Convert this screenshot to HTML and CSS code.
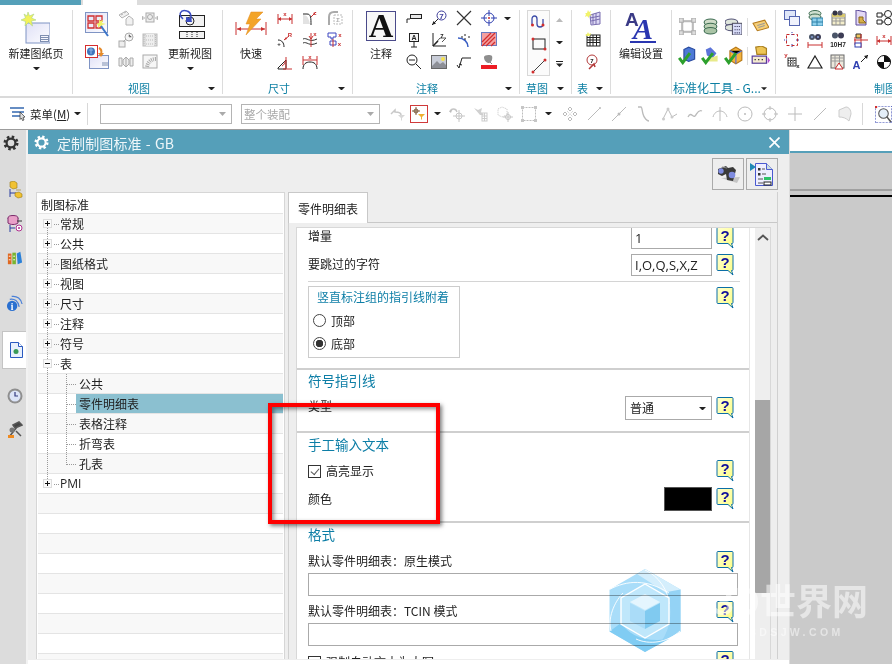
FILE: index.html
```html
<!DOCTYPE html>
<html lang="zh-CN">
<head>
<meta charset="utf-8">
<title>定制制图标准 - GB</title>
<link rel="stylesheet" href="styles.css">
</head>
<body>
<svg class="defs" width="0" height="0" aria-hidden="true">
  <defs>
    <linearGradient id="sheetg" x1="0" y1="0" x2="1" y2="1"><stop offset="0" stop-color="#dfe0f6"/><stop offset="1" stop-color="#fdfdff"/></linearGradient>
    <linearGradient id="helpg" x1="0" y1="0" x2="1" y2="1"><stop offset="0" stop-color="#ffffd0"/><stop offset="1" stop-color="#fdfd80"/></linearGradient>
    <symbol id="help" viewBox="0 0 18 22">
      <path d="M1 1.500a1 1 0 0 1 1-1h14a1 1 0 0 1 1 1v14a1 1 0 0 1-1 1h-.5l1.500 4.500-5-4.500H2a1 1 0 0 1-1-1z" fill="url(#helpg)" stroke="#0b6ea6" stroke-width="1"/>
      <text x="9" y="13.500" text-anchor="middle" class="qm">?</text>
    </symbol>
    <symbol id="gear" viewBox="0 0 16 16">
      <circle cx="8" cy="8" r="6" fill="none" stroke="currentColor" stroke-width="3" stroke-dasharray="2.400 2.310"/>
      <circle cx="8" cy="8" r="4.400" fill="none" stroke="currentColor" stroke-width="2.200"/>
    </symbol>
    <symbol id="minus" viewBox="0 0 7 3"><path d="M0 0h7L3.500 3.500z" fill="#222"/></symbol>
  </defs>
</svg>

<div class="app">
  <div class="topstrip"><span class="tab-file"></span><span class="tab-home"></span></div>

  <header class="ribbon">
    <section class="rg g1">
      <div class="big">
        <svg class="bigicon" width="30" height="32" viewBox="0 0 30 32"><rect x="6" y="11" width="24" height="20" fill="url(#sheetg)" stroke="#7f94c4"/><rect x="20.500" y="23.500" width="8" height="6" fill="none" stroke="#7f8fb0"/><path d="M21 25.500h7M21 27.500h7" stroke="#7f8fb0"/><path d="M8 0l1.500 4L14 2l-2.500 4L16 8l-4.500 1 1 5-4-3.500L5 14l.5-4.500L1 8l4.500-2L4 2l3 2z" fill="#f2f25c" stroke="#a8d48a" stroke-width=".6"/></svg>
        <span class="biglabel">新建图纸页</span>
        <svg class="bigdrop" width="7" height="3"><use href="#minus"/></svg>
      </div>
    </section>
    <i class="rsep"></i>
    <section class="rg g2">
      <div class="rbody">
        <div class="viewcol">
          <svg width="24" height="25" viewBox="0 0 24 25"><rect x=".5" y=".5" width="22" height="20" fill="url(#sheetg)" stroke="#7f94c4"/><path d="M3 4h6v5H3zM11 4h6v5h-6zM3 11h6v5H3zM11 11h5v5h-5z" fill="none" stroke="#d12f2f" stroke-width="1.300"/><path d="M14 6l1 3 3-1-1 3 4 1-4 1 1 3-3-2-2 2 0-3-2-1 3-1z" fill="#f1f36a"/><path d="M16 14l7 10" stroke="#3d76c9" stroke-width="2"/></svg>
          <svg width="24" height="25" viewBox="0 0 24 25"><rect x="4.500" y="10.500" width="19" height="13" fill="url(#sheetg)" stroke="#7f94c4"/><rect x=".5" y=".5" width="12" height="12" fill="#fff" stroke="#d62d2d"/><circle cx="6" cy="6.500" r="4" fill="#3f76bd"/><path d="M4 5h4M6 3v6" stroke="#8fb4e6"/><path d="M14 3c2 1 3 3 2 6" stroke="#e48a2a" stroke-width="2" fill="none"/><path d="M13 8h6l-3 4z" fill="#e48a2a"/><path d="M17 18h6M17 20h6" stroke="#7f8fb0"/></svg>
        </div>
        <div class="ics gc2 gray">
          <svg viewBox="0 0 16 16"><path d="M1 5l7-4 3 3-7 4zM8 9l3-3 4 3v6H8z" fill="#f1f1f1" stroke="#b5b5b5"/><path d="M3 5l2-1M6 3l2-1" stroke="#b5b5b5"/></svg>
          <svg viewBox="0 0 16 16"><rect x="1" y="9" width="6" height="6" fill="#eee" stroke="#aaa"/><circle cx="11" cy="5" r="4" fill="#f6f6f6" stroke="#aaa"/><path d="M11 2.500V5h2.500M5 10l3-3" stroke="#aaa"/></svg>
          <svg viewBox="0 0 16 16"><path d="M1 4h3v8H1zM12 4h3v8h-3zM5 6l3-3 3 3v4l-3 3-3-3z" fill="#eee" stroke="#aaa"/><path d="M8 3v10" stroke="#aaa"/></svg>
          <svg viewBox="0 0 16 16"><rect x="4" y="3" width="8" height="9" fill="#eee" stroke="#aaa"/><circle cx="8" cy="7" r="2.500" fill="none" stroke="#aaa"/><path d="M0 8h3M13 8h3M1 6l-1 2 1 2M15 6l1 2-1 2" fill="none" stroke="#aaa"/></svg>
          <svg viewBox="0 0 16 16"><rect x="1" y="2" width="14" height="12" fill="#ddd" stroke="#bbb"/><rect x="4" y="2" width="8" height="12" fill="#eee"/><path d="M2 3v10M13.500 3v10M4 4h8M4 8h8M4 12h8" stroke="#bbb" stroke-dasharray="1 1"/></svg>
          <svg viewBox="0 0 16 16"><rect x="1" y="1" width="14" height="13" fill="#f6f6f6" stroke="#aaa"/><path d="M14 5C9 5 6 8 5 13" fill="none" stroke="#aaa" stroke-width="4" stroke-dasharray="1 1"/></svg>
        </div>
        <div class="big bigview">
          <svg class="bigicon" width="32" height="32" viewBox="0 0 32 32"><rect x="5.500" y="6.500" width="25" height="11" fill="#f2f2f2" stroke="#222"/><circle cx="16" cy="12" r="4" fill="none" stroke="#222"/><rect x="5.500" y="22.500" width="25" height="7" fill="#f2f2f2" stroke="#222"/><path d="M13 23v6M18 23v6M23 23v6" stroke="#222" stroke-dasharray="1 1"/><path d="M9 10C4 6 6 0 13 2c4 1 5 6 3 10" fill="none" stroke="#3a4cc0" stroke-width="1.500"/><path d="M12 8l5 1 1 4h-6z" fill="#3a4cc0"/></svg>
          <span class="biglabel">更新视图</span>
          <svg class="bigdrop" width="7" height="3"><use href="#minus"/></svg>
        </div>
      </div>
      <div class="rfoot"><span>视图</span><svg width="7" height="3"><use href="#minus"/></svg></div>
    </section>
    <i class="rsep"></i>
    <section class="rg g3">
      <div class="rbody">
        <div class="big bigfast">
          <svg class="bigicon" width="32" height="32" viewBox="0 0 32 32"><path d="M1 15v13M31 15v13M2 22h28" stroke="#c93030" stroke-width="1"/><path d="M2 22l4-2v4zM30 22l-4-2v4z" fill="#c93030"/><path d="M16 5h12l-7 7h5L11 28l4-11h-4z" fill="#f3a428" stroke="#e08a20" stroke-width=".5"/></svg>
          <span class="biglabel">快速</span>
        </div>
        <div class="ics gc3 red">
          <svg viewBox="0 0 16 16"><path d="M1 4v10M15 4v10" stroke="#c93030"/><path d="M1 9h14" stroke="#c93030"/><path d="M1 9l3-2v4zM15 9l-3-2v4z" fill="#c93030"/><text x="8" y="5.500" class="mini">x</text></svg>
          <svg viewBox="0 0 16 16"><path d="M1 5v9c6 0 7 0 7 0-1-4-2-9-7-9z" fill="#e2e2e2"/><path d="M1 4h4c4 0 4 4 4 11" fill="none" stroke="#222"/><path d="M9 7l5-5" stroke="#c93030"/><text x="13" y="5" class="mini">c</text></svg>
          <svg viewBox="0 0 16 16"><path d="M2 15V7c0-3 2-5 5-5h4" fill="none" stroke="#aaa" stroke-width="2"/><path d="M7 5h8v9H7z" fill="none" stroke="#bbb" stroke-dasharray="2 1"/><text x="11" y="12" class="mini gray-t">Σ</text></svg>
          <svg viewBox="0 0 16 16"><path d="M1 8c4 0 6 3 6 7" fill="none" stroke="#222"/><path d="M7 8l5-4" stroke="#c93030"/><path d="M7 8l2-3 1 2z" fill="#c93030"/><text x="13" y="4.500" class="mini">R</text><text x="2" y="14" class="mini dark">+</text></svg>
          <svg viewBox="0 0 16 16"><path d="M1 7c4-2 6 4 14 0M1 11c4-2 6 4 14 0" fill="none" stroke="#333"/><path d="M9 1v14M7 4l2 3 2-3" stroke="#c93030" fill="none"/><text x="13" y="4" class="mini">x</text></svg>
          <svg viewBox="0 0 16 16"><path d="M1 1h8v4H6v2H4V5H1zM3 9h6M3 13h6M3 9v4M9 9v4" fill="none" stroke="#3c46c0"/><path d="M6 7v8" stroke="#c93030"/><text x="13" y="5" class="mini">x</text><text x="12.500" y="14" class="mini">x</text></svg>
          <svg viewBox="0 0 16 16"><path d="M1 14L9 6v9H1z" fill="none" stroke="#222"/><path d="M9 3v11" stroke="#c93030"/><path d="M5 12c2-1 3-3 3-5" fill="none" stroke="#c93030"/><path d="M6 15h9" stroke="#c93030"/></svg>
          <svg viewBox="0 0 16 16"><path d="M1 15c0-5 3-7 7-7s7 2 7 7" fill="none" stroke="#222"/><path d="M1 2v9M15 2v9M1 6h14" stroke="#c93030"/><text x="8" y="4.500" class="mini">x</text></svg>
        </div>
      </div>
      <div class="rfoot"><span>尺寸</span><svg width="7" height="3"><use href="#minus"/></svg></div>
    </section>
    <i class="rsep"></i>
    <section class="rg g4">
      <div class="rbody">
        <div class="big bignote">
          <div class="abox">A</div>
          <span class="biglabel">注释</span>
        </div>
        <div class="ics gc4">
          <svg viewBox="0 0 16 16"><path d="M1 13V9h3" fill="none" stroke="#222"/><rect x="4.500" y="4.500" width="11" height="4" fill="#e8e8e8" stroke="#222"/></svg>
          <svg viewBox="0 0 16 16"><rect x="3.500" y="1.500" width="9" height="8" fill="#f4f4f4" stroke="#222"/><text x="8" y="8" class="mini dark big-m">A</text><path d="M8 9.500V15M5 15h6" stroke="#222"/></svg>
          <svg viewBox="0 0 16 16"><circle cx="6" cy="6" r="5" fill="#fff" stroke="#222"/><path d="M3 6h6M10 10l5 5" stroke="#222"/></svg>
          <svg viewBox="0 0 16 16"><circle cx="10.500" cy="5.500" r="4.500" fill="#fff" stroke="#3d3d9a"/><text x="10.500" y="8.500" class="mini blue-t">7</text><path d="M1 15l6-6" stroke="#222"/><path d="M1 15l1.500-4 2.500 2.500z" fill="#222"/></svg>
          <svg viewBox="0 0 16 16"><path d="M2 1v13h13" fill="none" stroke="#222"/><path d="M3 13l6-7h6l-4 4" fill="none" stroke="#555"/><path d="M2 14l5-5" stroke="#222" stroke-width="1.500"/><text x="11" y="6" class="mini dark">7</text></svg>
          <svg viewBox="0 0 16 16"><rect x=".5" y="1.500" width="15" height="13" fill="#c9cdd8" stroke="#666"/><path d="M1 12l5-5 3 3 3-2 3 3v3H1z" fill="#8d8f96"/><circle cx="12" cy="5" r="2" fill="#f6e24e"/></svg>
          <svg viewBox="0 0 16 16"><path d="M1 1l14 14M15 1L1 15" stroke="#333" stroke-width="1.200"/></svg>
          <svg viewBox="0 0 16 16"><path d="M2 6c6 0 10 4 10 9" fill="none" stroke="#3a5fc4" stroke-width="1.500"/><path d="M9 2v2M9 6v2M12 5h2M5 5h2" stroke="#222"/></svg>
          <svg viewBox="0 0 16 16"><path d="M1 11l2 3 3-10h9" fill="none" stroke="#222"/><path d="M3 10l3 1" stroke="#222"/></svg>
          <svg viewBox="0 0 16 16"><circle cx="8" cy="8" r="5" fill="none" stroke="#2f3fb0"/><circle cx="8" cy="8" r="1" fill="#c62828"/><path d="M8 0v6M8 10v6M0 8h6M10 8h6" stroke="#2f3fb0"/></svg>
          <svg viewBox="0 0 16 16"><rect x=".5" y=".5" width="15" height="13" fill="#f4a0a0" stroke="#6a7bc0"/><path d="M1 10l9-9M1 14L14 1M5 14l9-9M10 14l4-4" stroke="#d32f2f" stroke-width="1.300"/></svg>
          <svg viewBox="0 0 16 16"><path d="M3 3c0-2 6-3 8-1 1 3-1 7-3 7S3 7 3 3z" fill="#8e8e8e"/><path d="M9 8l2 2" stroke="#888"/><rect y="11" width="16" height="4" fill="#ec1c24"/></svg>
          <svg class="sd" width="7" height="3"><use href="#minus"/></svg>
        </div>
      </div>
      <div class="rfoot"><span>注释</span><svg width="7" height="3"><use href="#minus"/></svg></div>
    </section>
    <i class="rsep"></i>
    <section class="rg g5">
      <div class="rbody">
        <div class="sketchbox">
          <svg viewBox="0 0 16 16"><path d="M1 11V5c0-4 5-4 5 0v5c0 4 6 4 6 0V5" fill="none" stroke="#3d4ca8" stroke-width="1.300"/><circle cx="1.500" cy="11" r="1.500" fill="#d12f2f"/><circle cx="12" cy="11" r="1.500" fill="#d12f2f"/></svg>
          <svg viewBox="0 0 16 16"><rect x="2" y="3" width="12" height="10" fill="none" stroke="#222"/><circle cx="2" cy="3" r="1.500" fill="#d12f2f"/><circle cx="14" cy="13" r="1.500" fill="#d12f2f"/></svg>
          <svg viewBox="0 0 16 16"><path d="M2 14L14 2" stroke="#444"/><circle cx="2" cy="14" r="1.500" fill="#d12f2f"/><circle cx="14" cy="2" r="1.500" fill="#d12f2f"/></svg>
        </div>
        <div class="sketcharrows">
          <svg width="7" height="4" viewBox="0 0 7 4"><path d="M0 4h7L3.500 0z" fill="#bbb"/></svg>
          <svg width="7" height="3"><use href="#minus"/></svg>
          <svg width="7" height="6" viewBox="0 0 7 6"><path d="M0 0h7v1H0z" fill="#222"/><path d="M0 2.500h7L3.500 6z" fill="#222"/></svg>
        </div>
      </div>
      <div class="rfoot"><span>草图</span><svg width="7" height="3"><use href="#minus"/></svg></div>
    </section>
    <i class="rsep"></i>
    <section class="rg g6">
      <div class="rbody">
        <div class="ics gc1">
          <svg viewBox="0 0 16 16"><path d="M5 5l10-3v12L6 15z" fill="#dcd8f4" stroke="#7a6fb0"/><path d="M5 8l10-2M6 11l9-2M8 4v10M11 3v11" stroke="#7a6fb0"/><path d="M3 0l1 2 2-1-1 3 2 1-3 1 0 2-2-2-2 1 1-3-1-1 2 0z" fill="#f1f36a"/></svg>
          <svg viewBox="0 0 16 16"><rect x="2" y="3" width="13" height="11" fill="#fff" stroke="#222"/><path d="M2 5.500h13M2 8h13M2 10.500h13M5 3v11M8 3v11M11.500 3v11" stroke="#222"/><path d="M3 0l1 2 2-1-1 3-3 0-2-1 2-1z" fill="#f1f36a"/></svg>
          <svg viewBox="0 0 16 16"><circle cx="7" cy="6" r="5" fill="#fff" stroke="#b33a3a"/><text x="7" y="9" class="mini dark">7</text><path d="M4 15l5-5 1 3" fill="none" stroke="#b33a3a" stroke-width="1.500"/></svg>
        </div>
      </div>
      <div class="rfoot"><span>表</span><svg width="7" height="3"><use href="#minus"/></svg></div>
    </section>
    <i class="rsep"></i>
    <section class="rg g7">
      <div class="big bigedit">
        <div class="aa"><span class="aa1">A</span><span class="aa2">A</span><i class="aaline"></i></div>
        <span class="biglabel">编辑设置</span>
      </div>
    </section>
    <i class="rsep"></i>
    <section class="rg g8">
      <div class="rbody">
        <div class="ics8">
          <svg viewBox="0 0 16 16"><rect x="3" y="3" width="10" height="10" fill="none" stroke="#bbb" stroke-width="2"/><path d="M0 0h4v4H0zM12 0h4v4h-4zM0 12h4v4H0zM12 12h4v4h-4z" fill="#ddd" stroke="#aaa"/></svg>
          <svg viewBox="0 0 16 16"><ellipse cx="8" cy="4" rx="6" ry="3" fill="#cfdcc8" stroke="#3c6b50"/><ellipse cx="8" cy="8" rx="6" ry="3" fill="#bcd0b4" stroke="#3c6b50"/><ellipse cx="8" cy="12" rx="6" ry="3" fill="#aac4a6" stroke="#3c6b50"/></svg>
          <svg viewBox="0 0 16 16"><ellipse cx="6" cy="4" rx="6" ry="3" fill="#dfe6dc" stroke="#557"/><ellipse cx="6" cy="9" rx="6" ry="3" fill="#dfe6dc" stroke="#557"/><rect x="7" y="5" width="9" height="11" fill="#d8dcf8" stroke="#556"/><path d="M9 8h5M9 11h5M9 14h5" stroke="#335" stroke-dasharray="1 1"/></svg>
          <i class="v8"></i>
          <svg viewBox="0 0 16 16"><path d="M1 5l11-3 4 7-11 3z" fill="#f6cf78" stroke="#b57d20"/><path d="M5 7l7-2M6 9l6-2" stroke="#999"/></svg>
          <svg viewBox="0 0 16 16"><path d="M5 3l4-2 5 2v8l-5 2-4-2z" fill="#4d79d6" stroke="#2b4ca0"/><path d="M1 10l3 4 6-8" fill="none" stroke="#2da02d" stroke-width="2.500"/></svg>
          <svg viewBox="0 0 16 16"><path d="M4 3l4-2 5 5-3 4-5-2z" fill="#5c74d8"/><path d="M5 11l9-3v5H5z" fill="#e8ea8a"/><path d="M1 10l3 4 6-8" fill="none" stroke="#2da02d" stroke-width="2.500"/></svg>
          <svg viewBox="0 0 16 16"><path d="M5 4l5-3 5 3v8l-5 3-5-3z" fill="#f4b33c" stroke="#b87a18"/><path d="M5 4l5 3 5-3M10 7v8" stroke="#5c74d8"/><path d="M1 10l3 4 6-8" fill="none" stroke="#2da02d" stroke-width="2.500"/></svg>
          <i class="v8"></i>
          <svg viewBox="0 0 16 16"><path d="M4 1l5-1 4 2v5H5z" fill="#eec556" stroke="#aa8020"/><rect x="1" y="8.500" width="12" height="6" fill="#f4ead0" stroke="#553b9a"/><path d="M3 11.500h1M6 11.500h1M9 11.500h1" stroke="#222"/><path d="M14 9l2 3-2 3z" fill="#b34ad0"/></svg>
        </div>
      </div>
      <div class="rfoot"><span>标准化工具 - G...</span><svg width="7" height="3"><use href="#minus"/></svg></div>
    </section>
    <i class="rsep"></i>
    <section class="rg g9">
      <div class="rbody">
        <div class="ics9">
          <svg viewBox="0 0 16 16"><rect x=".5" y=".5" width="11" height="9" fill="#dfe6f8" stroke="#5566b0"/><rect x="5.500" y="6.500" width="10" height="9" fill="#f0f2fc" stroke="#5566b0"/></svg>
          <svg viewBox="0 0 16 16"><ellipse cx="8" cy="3.500" rx="6" ry="3" fill="#cfe0d0" stroke="#3c6b50"/><ellipse cx="8" cy="7" rx="6" ry="3" fill="#cfe0d0" stroke="#3c6b50"/><rect x="5" y="8" width="11" height="8" fill="#8fd0ec" stroke="#2d80a8"/><path d="M5 12h11M10 8v8" stroke="#2d80a8"/></svg>
          <svg viewBox="0 0 16 16"><rect x="2" y="4" width="13" height="11" fill="#f4eecb" stroke="#777"/><path d="M2 8h13M2 11h13M6 8v7M10 8v7" stroke="#999"/><rect x="2" y="4" width="13" height="3" fill="#d8c86e"/><circle cx="5" cy="3" r="2.500" fill="#334"/><circle cx="10" cy="3" r="2.500" fill="#556"/></svg>
          <svg viewBox="0 0 16 16"><path d="M3 0l10 2v13L3 15z" fill="#e3d8f4" stroke="#5a4a9a"/><path d="M6 7h4v3l3 3H6z" fill="#d8b04a" stroke="#8a6a18"/></svg>
          <svg viewBox="0 0 16 16"><path d="M1 3h5v4H1zM1 10h5v4H1z" fill="none" stroke="#222"/><circle cx="12" cy="4" r="3.500" fill="#fff" stroke="#222"/><circle cx="12" cy="11.500" r="3.500" fill="#fff" stroke="#222"/><path d="M6 5h2M6 12h2" stroke="#222"/></svg>
          <svg viewBox="0 0 16 16"><rect x="2.500" y="2.500" width="11" height="11" fill="none" stroke="#c62828" stroke-dasharray="3 2"/><path d="M8 0v4M8 12v4M0 8h4M12 8h4" stroke="#2f3fb0" stroke-dasharray="1 1"/></svg>
          <svg viewBox="0 0 16 16"><path d="M1 10v6M15 10v6M1 13h14" stroke="#c93030"/><circle cx="5" cy="5" r="3" fill="#4a5568"/><circle cx="11" cy="5" r="3" fill="#3d3d55"/><circle cx="5" cy="5" r="1" fill="#8aa0d8"/><circle cx="11" cy="5" r="1" fill="#8aa0d8"/></svg>
          <svg viewBox="0 0 16 16"><circle cx="5" cy="3.500" r="3" fill="#4a5568"/><circle cx="11" cy="3.500" r="3" fill="#3d3d55"/><text x="8" y="15" class="tol">10H7</text></svg>
          <svg viewBox="0 0 16 16"><path d="M3 2h5v4H3z" fill="#efc45e" stroke="#333"/><path d="M1 8h14M8 2v14M2 5v8" stroke="#c93030"/><rect x="2" y="11" width="6" height="4" fill="#fff" stroke="#2f3fb0"/></svg>
          <svg viewBox="0 0 16 16"><path d="M1 4v9M15 4v9M1 9h14" stroke="#c93030"/><path d="M1 9l3-2v4zM15 9l-3-2v4z" fill="#c93030"/><text x="8" y="6" class="mini">x</text></svg>
          <svg viewBox="0 0 16 16"><rect x="4" y="4" width="8" height="8" fill="#fff" stroke="#333"/><path d="M4 6.500h8M4 9h8M6.500 4v8M9 4v8" stroke="#333" stroke-dasharray="1 .5"/><text x="14" y="14" class="mini dark">x</text><text x="2" y="3" class="mini">y</text></svg>
          <svg viewBox="0 0 16 16"><path d="M8 2l7 12H1z" fill="#fff" stroke="#222" stroke-width="1.200"/></svg>
          <svg viewBox="0 0 16 16"><rect x="1" y="1" width="13" height="13" fill="#ece8dc" stroke="#666"/><path d="M1 4h13M1 7h13M5 1v13M9.500 1v13" stroke="#999"/><path d="M9 9l4 6H5z" fill="#fff" stroke="#c62828"/></svg>
          <svg viewBox="0 0 16 16"><text x="3.500" y="15" class="aq">A</text><path d="M8 8l7-7" stroke="#222"/><path d="M15 1l-4 1 3 3z" fill="#222"/></svg>
          <svg viewBox="0 0 16 16"><circle cx="8" cy="8" r="6.500" fill="#fff" stroke="#111"/><path d="M8 1.500A6.500 6.500 0 0 1 14.500 8H8zM8 8v6.500A6.500 6.500 0 0 1 1.500 8z" fill="#111"/></svg>
        </div>
      </div>
      <div class="rfoot"><span>制图</span></div>
    </section>
  </header>

  <nav class="toolbar">
    <svg class="menuicon" width="17" height="14" viewBox="0 0 17 14"><path d="M0 1h14M2 5h12M2 9h8" stroke="#3568b0" stroke-width="1.500"/><path d="M10 5l5 5-2 .5 1 2.500-1.500.5-1-2.500-1.500 1.500z" fill="#dedede" stroke="#333" stroke-width=".7"/></svg>
    <span class="menutext">菜单(<u>M</u>)</span>
    <svg class="tdrop" width="7" height="3"><use href="#minus"/></svg>
    <i class="tsep"></i>
    <div class="tsel s1"><svg width="7" height="4" viewBox="0 0 7 4"><path d="M0 0h7L3.500 4z" fill="#aaa"/></svg></div>
    <div class="tsel s2"><span>整个装配</span><svg width="7" height="4" viewBox="0 0 7 4"><path d="M0 0h7L3.500 4z" fill="#aaa"/></svg></div>
    <div class="tc t1">
      <svg viewBox="0 0 16 16"><path d="M1 8l4-4v2c4 0 6 1 6 3" fill="none" stroke="#c8c8c8" stroke-width="1.500"/><path d="M8 9h7l-3 3v3l-1-1v-2z" fill="#d8d8d8"/></svg>
      <span class="redbox"><svg viewBox="0 0 16 16"><path d="M5 1v8M1 5h8" stroke="#7a5a3a"/><circle cx="5" cy="5" r="2" fill="none" stroke="#7a5a3a"/><path d="M7 8h7l-3 3v3l-1-1v-2z" fill="#efb030"/></svg></span>
      <svg class="tdropi" width="7" height="3"><use href="#minus"/></svg>
    </div>
    <div class="tc t2">
      <svg viewBox="0 0 16 16"><path d="M1 6c1-4 6-4 7 0" fill="none" stroke="#c6c6c6" stroke-width="1.300"/><path d="M0 5l2 2 1-3z" fill="#bbb"/><path d="M10 4v12M4 10h12" stroke="#c6c6c6"/><circle cx="10" cy="10" r="3" fill="none" stroke="#c6c6c6"/></svg>
      <svg viewBox="0 0 16 16"><path d="M1 2l4 2 4-2-1 4 3 3-4 0z" fill="#d0d0d0"/><rect x="9" y="7" width="5" height="8" fill="none" stroke="#ccc"/><path d="M9 10h5M9 12.500h5M11.500 7v8" stroke="#ccc"/></svg>
      <svg viewBox="0 0 16 16"><path d="M1 3l4-2 5 2v6l-5 2-4-2z" fill="none" stroke="#c6c6c6" stroke-dasharray="1 1"/><path d="M11 6v10M6 11h10" stroke="#c6c6c6"/><circle cx="11" cy="11" r="2.500" fill="none" stroke="#c6c6c6"/></svg>
      <svg viewBox="0 0 16 16"><rect x="1.500" y="1.500" width="13" height="13" fill="none" stroke="#bdbdbd" stroke-dasharray="2 1"/><path d="M0 0h3v3H0zM13 0h3v3h-3zM0 13h3v3H0zM13 13h3v3h-3z" fill="#c6c6c6"/></svg>
      <svg class="tdropi" width="7" height="3"><use href="#minus"/></svg>
    </div>
    <div class="tc t3">
      <svg viewBox="0 0 16 16"><path d="M8 1l2 2-2 2-2-2zM8 11l2 2-2 2-2-2zM1 8l2-2 2 2-2 2zM11 8l2-2 2 2-2 2z" fill="none" stroke="#bbb"/><path d="M5 5l6 6M11 5l-6 6" stroke="#ccc" stroke-dasharray="1 1"/></svg>
      <svg viewBox="0 0 16 16"><path d="M2 14L14 2" stroke="#bbb"/><circle cx="14" cy="2" r="1" fill="#bbb"/></svg>
      <svg viewBox="0 0 16 16"><path d="M1 15L15 1" stroke="#bbb"/><circle cx="8" cy="8" r="1.500" fill="#bbb"/></svg>
      <svg viewBox="0 0 16 16"><path d="M3 1h3c1 0 1 3 2 7s4 7 6 7" fill="none" stroke="#bbb" stroke-width="1.300"/></svg>
    </div>
    <div class="tc t4">
      <svg viewBox="0 0 16 16"><path d="M1 13L6 3l4 8 5-3" fill="none" stroke="#bbb"/><circle cx="6" cy="3" r="1.500" fill="#ccc"/><circle cx="10" cy="11" r="1.500" fill="#ccc"/><circle cx="1.500" cy="13" r="1.500" fill="#ccc"/></svg>
      <svg viewBox="0 0 16 16"><path d="M1 11c3-6 5 1 7-1s3-7 7-5" fill="none" stroke="#bbb" stroke-width="1.300"/></svg>
      <svg viewBox="0 0 16 16"><path d="M8 1v14M1 11c1-4 4-6 7-6s6 2 7 6" fill="none" stroke="#bbb"/></svg>
      <svg viewBox="0 0 16 16"><circle cx="8" cy="8" r="7" fill="none" stroke="#bbb"/><circle cx="8" cy="8" r="1" fill="#bbb"/></svg>
      <svg viewBox="0 0 16 16"><circle cx="8" cy="8" r="6" fill="none" stroke="#bbb"/><path d="M8 0v4M8 12v4M0 8h4M12 8h4" stroke="#bbb"/></svg>
      <svg viewBox="0 0 16 16"><path d="M8 1v14M1 8h14" stroke="#bbb"/></svg>
      <svg viewBox="0 0 16 16"><path d="M2 14L14 2" stroke="#bbb"/></svg>
      <svg viewBox="0 0 16 16"><path d="M2 11V4l7-3c3 0 5 3 5 7l-2 7c-3-3-6-4-10-4z" fill="#eee" stroke="#ccc"/></svg>
    </div>
    <i class="tsep s3"></i>
    <span class="redbox zoomi"><svg viewBox="0 0 16 16"><rect x="0" y="0" width="16" height="16" fill="none" stroke="#2f3fb0" stroke-dasharray="2 1"/><circle cx="8" cy="7" r="4.500" fill="#e4eef8" stroke="#555"/><path d="M11 10l4 5" stroke="#555" stroke-width="1.500"/><path d="M0 0h2v2H0z" fill="#d12f2f"/></svg></span>
  </nav>

  <main class="workspace">
    <aside class="rail">
      <svg class="railgear" width="16" height="16"><use href="#gear"/></svg>
      <svg class="r-a" width="16" height="18" viewBox="0 0 16 18"><path d="M3 1l4-1 3 2v5l-4 1-3-2z" fill="#f1c232" stroke="#9a7a10" stroke-width=".6"/><path d="M3 8v8M3 12h6" stroke="#2a3fa0"/><path d="M9 9h5M8 12l4-1 3 2v3l-4 1-3-2z" fill="#f1c232" stroke="#9a7a10" stroke-width=".6"/></svg>
      <svg class="r-b" width="16" height="18" viewBox="0 0 16 18"><ellipse cx="6" cy="3" rx="5" ry="2.500" fill="#e8a0c8" stroke="#7a2a6a"/><path d="M1 3v5c2 2 8 2 10 0V3" fill="#e8a0c8" stroke="#7a2a6a"/><path d="M3 10v7M3 13h5" stroke="#2a3fa0"/><circle cx="12" cy="13" r="3" fill="#fff" stroke="#b03090"/><circle cx="12" cy="13" r="1" fill="#b03090"/><path d="M10 6h5" stroke="#333"/></svg>
      <svg class="r-c" width="16" height="16" viewBox="0 0 18 16"><path d="M1 3h4v12H1z" fill="#e06820"/><path d="M6 2h4v13H6z" fill="#78b430"/><path d="M11 3l4-2 2 12-5 2z" fill="#2a80d8"/><path d="M2 6h2M7 6h2M2 10h2M7 10h2" stroke="#fff"/></svg>
      <svg class="r-d" width="17" height="18" viewBox="0 0 18 18"><circle cx="6.500" cy="11" r="5.500" fill="#2a70d0"/><text x="6.500" y="15" class="iinfo">i</text><path d="M4 4c5-1 9 2 10 8M6 1c6-1 10 3 11 8" fill="none" stroke="#4a80d8" stroke-width="1.300"/></svg>
      <div class="railtab"><svg width="13" height="16" viewBox="0 0 13 16"><path d="M.5.500h8l4 4v11H.5z" fill="#e8f0fc" stroke="#2a5ac0"/><path d="M8.500.5v4h4" fill="#fff" stroke="#2a5ac0"/><circle cx="6" cy="9.500" r="2.500" fill="#3a9a58"/></svg></div>
      <svg class="r-e" width="16" height="16" viewBox="0 0 16 16"><circle cx="8" cy="8" r="7.500" fill="#8f8f8f"/><circle cx="8" cy="8" r="5.500" fill="#dce4f8"/><path d="M8 4v4h3" fill="none" stroke="#333a80" stroke-width="1.200"/></svg>
      <svg class="r-f" width="16" height="18" viewBox="0 0 16 18"><path d="M2 16l8-10M6 4l6-3 3 3-7 3z" stroke="#555" fill="#444" stroke-width="1.500"/><circle cx="5" cy="9" r="2.500" fill="#777"/><path d="M1 14h6v3H1z" fill="#ef8a20"/><path d="M9 10l5 5" stroke="#555" stroke-width="1.500"/></svg>
    </aside>

    <section class="dialog">
      <header class="dtitle">
        <svg class="dgear" width="15" height="15"><use href="#gear"/></svg>
        <h1>定制制图标准 - GB</h1>
        <svg class="dclose" width="11" height="11" viewBox="0 0 11 11"><path d="M.5.5l10 10M10.500.5l-10 10" stroke="#fff" stroke-width="1.700"/></svg>
      </header>
      <div class="dtools">
        <button class="tbtn" type="button"><svg width="24" height="20" viewBox="0 0 24 20"><path d="M5 14l16 5 3-6z" fill="#c4c4c4"/><path d="M2 5l8-3 2 2 5-1 3 3-3 11-6-1-1-6-4 2-4-2z" fill="#3a3a3a"/><circle cx="5" cy="7" r="2.700" fill="#7f8ce0"/><circle cx="16" cy="11" r="3.300" fill="#7f8ce0"/><path d="M6 3l5 1" stroke="#888"/></svg></button>
        <button class="tbtn" type="button"><svg width="24" height="25" viewBox="0 0 24 25"><path d="M5.500 1.500h11l6 6v16h-17z" fill="#eef" stroke="#4a5ad0"/><path d="M16.500 1.500v6h6" fill="#cdd" stroke="#4a5ad0"/><path d="M0 1l6 4-6 4z" fill="#1e88b4"/><rect x="8" y="6" width="2.500" height="2.500" fill="#333"/><rect x="8" y="11" width="2.500" height="2.500" fill="#333"/><path d="M8 17h5M8 21h5M12 7h3M12 12h4" stroke="#555"/><rect x="14" y="15" width="7" height="3" fill="#2ec26a"/><rect x="14" y="20" width="7" height="3" fill="#fff" stroke="#222"/></svg></button>
      </div>
      <div class="dbody">
        <div class="tree">
          <div class="treehead">制图标准</div>
          <div class="rows">
            <div class="row rt first"><i class="ex"></i><span>常规</span></div>
            <div class="row rt"><i class="ex"></i><span>公共</span></div>
            <div class="row rt"><i class="ex"></i><span>图纸格式</span></div>
            <div class="row rt"><i class="ex"></i><span>视图</span></div>
            <div class="row rt"><i class="ex"></i><span>尺寸</span></div>
            <div class="row rt"><i class="ex"></i><span>注释</span></div>
            <div class="row rt"><i class="ex"></i><span>符号</span></div>
            <div class="row rt open"><i class="ex minusx"></i><span>表</span></div>
            <div class="row rc"><span>公共</span></div>
            <div class="row rc sel"><span>零件明细表</span></div>
            <div class="row rc"><span>表格注释</span></div>
            <div class="row rc"><span>折弯表</span></div>
            <div class="row rc last"><span>孔表</span></div>
            <div class="row rt final"><i class="ex"></i><span class="lat">PMI</span></div>
            <div class="row"></div><div class="row"></div><div class="row"></div><div class="row"></div><div class="row"></div><div class="row"></div><div class="row"></div><div class="row"></div><div class="row"></div>
          </div>
        </div>
        <div class="tabs">
          <div class="tabhead"><span class="tab">零件明细表</span><i class="tabline"></i></div>
          <div class="tabpage">
            <div class="pane">
              <div class="scroll">
                <section class="sec s-a">
                  <div class="frow clipfirst"><label class="up3">增量</label><input class="tin w81 lat" type="text" value="1"><svg class="hq"><use href="#help"/></svg></div>
                  <div class="frow r2"><label class="up2">要跳过的字符</label><input class="tin w81 lat" type="text" value="I,O,Q,S,X,Z"><svg class="hq"><use href="#help"/></svg></div>
                  <hr class="thin">
                  <div class="grow">
                    <div class="gbox">
                      <div class="gtitle">竖直标注组的指引线附着</div>
                      <div class="radio"><i class="rd"></i><span>顶部</span></div>
                      <div class="radio"><i class="rd on"></i><span>底部</span></div>
                    </div>
                    <svg class="hq"><use href="#help"/></svg>
                  </div>
                </section>
                <section class="sec s-b">
                  <h2>符号指引线</h2>
                  <div class="frow"><label class="up3">类型</label><div class="sel-box"><span>普通</span><svg width="7" height="3"><use href="#minus"/></svg></div><svg class="hq"><use href="#help"/></svg></div>
                </section>
                <section class="sec s-c">
                  <h2>手工输入文本</h2>
                  <div class="frow h22"><label class="chk"><i class="cb on"></i>高亮显示</label><svg class="hq"><use href="#help"/></svg></div>
                  <div class="frow r-col"><label>颜色</label><i class="swatch"></i><svg class="hq"><use href="#help"/></svg></div>
                </section>
                <section class="sec s-d">
                  <h2>格式</h2>
                  <div class="frow h22"><label class="up2">默认零件明细表：原生模式</label><svg class="hq"><use href="#help"/></svg></div>
                  <input class="wide" type="text">
                  <div class="frow h22 m5"><label class="up2">默认零件明细表：TCIN 模式</label><svg class="hq"><use href="#help"/></svg></div>
                  <input class="wide" type="text">
                  <div class="frow h22 m5"><label class="chk"><i class="cb"></i>强制自动文本为大写</label><svg class="hq"><use href="#help"/></svg></div>
                </section>
              </div>
              <div class="sbar"><svg class="sup" width="12" height="7" viewBox="0 0 12 7"><path d="M1 6l5-4.500L11 6" fill="none" stroke="#555" stroke-width="1.800"/></svg><i class="thumb"></i></div>
            </div>
          </div>
        </div>
      </div>
    </section>

    <aside class="graphics">
      <div class="gwhite"></div>
      <div class="gteal"></div>
      <div class="gline1"></div>
      <div class="gline2"></div>
    </aside>
  </main>

  <div class="redframe"></div>
  <div class="wm">
    <svg class="wmhex" width="72" height="83" viewBox="0 0 72 83">
      <path d="M36 0l35.500 20.500v42L36 83 .5 62.500v-42z" fill="#a9ddf9"/>
      <path d="M36 0l35.500 20.500L62 27 28 5z" fill="#d4eefc"/>
      <path d="M71.500 20.500v42L52 73c10-14 12-32 6-50z" fill="#94d3f5"/>
      <path d="M36 83L.5 62.500 12 54c8 12 24 20 48 16z" fill="#80ccf3"/>
      <path d="M.5 20.500C18 11 38 10 60 24M71 62C58 74 40 76 27 70M2 62C-2 46 8 30 14 24M36 1c14 6 24 22 24 34" fill="none" stroke="#fff" stroke-width=".9"/>
      <path d="M36 15l24 14v26L36 69 12 55V29z" fill="#bfe7fb" stroke="#fff" stroke-width="1.400"/>
      <path d="M21 33l15-8 15 8-15 8z" fill="#e4f5fe"/>
      <path d="M21 34l15 8v18l-15-8z" fill="#aadcf8"/>
      <path d="M51 34l-15 8v18l15-8z" fill="#80caf0"/>
    </svg>
    <div class="wmtext">
      <div class="wmcn">3D世界网</div>
      <div class="wmen">3DSJW.COM</div>
    </div>
  </div>
</div>
</body>
</html>
```
FILE: styles.css
```css
* { box-sizing: border-box; }
html, body { margin: 0; padding: 0; }
body {
  width: 892px; height: 664px; overflow: hidden; background: #fff;
  font: 12px/16px "Noto Sans CJK SC", sans-serif; color: #222;
}
.defs { position: absolute; }
.qm { font: 700 15px "Liberation Sans", sans-serif; fill: #10109c; }
.mini { font: 700 6px "Liberation Sans", sans-serif; fill: #c93030; text-anchor: middle; }
.mini.dark { fill: #222; }
.mini.gray-t { fill: #aaa; }
.mini.blue-t { fill: #3d3d9a; font-size: 8px; }
.big-m { font-size: 7px; }
.tol { font: 700 6.500px "Liberation Sans", sans-serif; fill: #222; text-anchor: middle; }
.aq { font: 700 11px "Liberation Sans", sans-serif; fill: #2f3fb0; text-anchor: middle; }
.iinfo { font: 700 10px "Liberation Serif", serif; fill: #fff; text-anchor: middle; }
.app { position: relative; width: 892px; height: 664px; display: flex; flex-direction: column; overflow: hidden; }

.topstrip { height: 5px; background: #dcdcdc; display: flex; flex: none; }
.tab-file { width: 81px; background: #55a0b9; }
.tab-home { width: 54px; margin-left: 2px; background: #fff; }

.ribbon { height: 93px; flex: none; display: flex; background: #fff; border-bottom: 2px solid #dadada; }
.rsep { flex: none; width: 1px; height: 84px; margin-top: 5px; background: #dcdcdc; }
.rg { flex: none; display: flex; flex-direction: column; }
.g1 { width: 72px; } .g2 { width: 149px; } .g3 { width: 129px; } .g4 { width: 166px; }
.g5 { width: 51px; } .g6 { width: 38px; } .g7 { width: 60px; } .g8 { width: 103px; } .g9 { width: 116px; }
.rbody { height: 75px; flex: none; display: flex; padding-top: 2px; }
.rfoot { height: 16px; display: flex; align-items: center; justify-content: space-between; padding-right: 7px; font-size: 11px; line-height: 16px; color: #0b7fa3; white-space: nowrap; }
.g2 .rfoot { padding-left: 55px; } .g3 .rfoot { padding-left: 45px; } .g4 .rfoot { padding-left: 63px; }
.g5 .rfoot { padding-left: 6px; } .g6 .rfoot { padding-left: 5px; } .g8 .rfoot { padding-left: 1px; padding-right: 8px; font-size: 12px; }
.g9 .rfoot { padding-left: 98px; justify-content: flex-start; }

.big { display: flex; flex-direction: column; align-items: center; }
.bigicon { height: 32px; flex: none; margin-bottom: 6px; }
.g1 .big { width: 72px; padding-top: 7px; }
.biglabel { font-size: 11px; line-height: 16px; white-space: nowrap; height: 16px; }
.bigdrop { margin-top: 6px; flex: none; }
.g1 .bigicon { margin-left: -2px; margin-bottom: 1px; }

.viewcol { width: 24px; margin-left: 12px; padding-top: 5px; display: flex; flex-direction: column; gap: 8px; }
.ics { display: grid; grid-auto-flow: column; grid-template-rows: repeat(3, 22px); place-items: center; }
.ics svg { width: 16px; height: 16px; }
.gc2 { margin-left: 5px; grid-template-columns: repeat(2, 24px); }
.bigview { width: 46px; margin-left: 5px; }
.bigview .bigicon { margin-top: 2px; margin-bottom: 4px; }
.bigfast { width: 42px; margin-left: 7px; }
.gc3 { grid-template-columns: repeat(3, 25px); grid-auto-flow: row; }
.bignote { width: 36px; margin-left: 10px; }
.abox { width: 30px; height: 30px; margin-top: 4px; margin-bottom: 4px; border: 1px solid #4a4a8a; background: #f8f8f8; font: 700 34px/28px "Liberation Serif", serif; color: #111; text-align: center; flex: none; }
.gc4 { margin-left: 2px; grid-template-columns: repeat(4, 25px) 12px; }
.gc4 .sd { width: 7px; height: 3px; grid-row: 1; }
.sketchbox { margin: 3px 0 0 7px; width: 23px; height: 66px; display: grid; grid-template-rows: repeat(3, 22px); place-items: center; border: 1px solid #d8d8d8; background: #fbfbfb; }
.sketchbox svg { width: 16px; height: 16px; }
.sketcharrows { margin-left: 5px; width: 9px; display: grid; grid-template-rows: repeat(3, 22px); place-items: center; padding-top: 2px; }
.gc1 { width: 38px; grid-template-columns: 40px; padding-left: 1px; }
.bigedit { width: 60px; padding-top: 5px; }
.aa { position: relative; width: 32px; height: 35px; flex: none; }
.aa1 { position: absolute; left: 0; top: 0; font: 700 19px/20px "Liberation Sans", sans-serif; color: #3a3a86; }
.aa2 { position: absolute; left: 8px; top: 4px; font: italic 700 30px/30px "Liberation Serif", serif; color: #2a36b0; }
.aaline { position: absolute; left: 5px; top: 31px; width: 26px; height: 2px; background: #2a36b0; }
.ics8 { margin: 5px 0 0 4px; display: grid; grid-template-columns: 23px 23px 23px 4px 23px; grid-template-rows: 29px 29px; place-items: center; }
.ics8 svg { width: 17px; height: 17px; }
.ics8 svg:nth-child(n+6) { width: 19px; height: 19px; }
.v8 { width: 1px; height: 18px; background: #ddd; }
.ics9 { margin-left: 4px; display: grid; grid-template-columns: repeat(5, 23px); grid-template-rows: repeat(3, 22px); place-items: center; }
.ics9 svg { width: 16px; height: 16px; }

.toolbar { height: 32px; flex: none; display: flex; align-items: center; padding-left: 10px; background: #fff; border-bottom: 1px solid #9c9c9c; }
.menuicon { flex: none; }
.menutext { margin-left: 3px; width: 44px; font-size: 11.500px; white-space: nowrap; }
.tdrop { flex: none; }
.tsep { flex: none; width: 1px; height: 22px; background: #d8d8d8; margin-left: 6px; }
.tsel { flex: none; height: 20px; border: 1px solid #b4b4b4; display: flex; align-items: center; justify-content: flex-end; padding: 0 5px; background: #fff; color: #a8a8a8; }
.tsel span { margin-right: auto; font-size: 11.500px; }
.s1 { width: 132px; margin-left: 12px; }
.s2 { width: 139px; margin-left: 9px; padding-left: 2px; }
.tc { display: flex; align-items: center; flex: none; }
.tc svg { width: 16px; height: 16px; flex: none; }
.tc svg.tdropi { width: 7px; height: 3px; }
.t1 { margin-left: 10px; gap: 5px; }
.t1 .tdropi { margin-left: 2px; }
.t2 { margin-left: 8px; gap: 8px; }
.t3 { margin-left: 9.500px; gap: 8.500px; }
.t4 { margin-left: 10.500px; gap: 9px; }
.redbox { width: 16px; height: 16px; outline: 1px solid #d03a3a; display: block; }
.redbox svg { display: block; }
.tsep.s3 { margin-left: 9px; }
.zoomi { margin-left: 12px; width: 17px; outline: 0; flex: none; }

.workspace { flex: 1; min-height: 0; display: flex; }
.rail { width: 28px; flex: none; background: #dcdcdc; border-right: 2px solid #f2f2f2; display: flex; flex-direction: column; align-items: center; padding-left: 3px; }
.railgear { color: #333; margin-top: 5px; align-self: flex-start; flex: none; }
.r-a { margin-top: 30px; flex: none; }
.r-b { margin-top: 16px; flex: none; }
.r-c { margin-top: 17px; flex: none; }
.r-d { margin-top: 29px; flex: none; }
.railtab { margin: 18px 0 0 -1px; align-self: flex-start; width: 24px; height: 38px; flex: none; background: #fff; border: 1px solid #c4c4c4; border-right: 0; display: flex; align-items: center; justify-content: center; padding-left: 3px; }
.r-e { margin-top: 19px; flex: none; }
.r-f { margin-top: 17px; flex: none; }

.dialog { width: 761px; flex: none; background: #eee; display: flex; flex-direction: column; height: 530px; }
.dtitle { height: 24px; flex: none; background: #559fb9; display: flex; align-items: center; color: #fff; padding: 0 9px 0 6px; }
.dgear { color: #fff; flex: none; }
.dtitle h1 { margin: 0 0 0 8px; padding-top: 1px; font: 400 14px/24px "Noto Sans CJK SC", sans-serif; word-spacing: 1px; letter-spacing: .1px; color: #eef6f9; }
.dclose { margin-left: auto; }
.dtools { height: 38px; flex: none; display: flex; justify-content: flex-end; gap: 2px; padding: 4px 11px 0 0; }
.tbtn { width: 32px; height: 32px; padding: 0; border: 1px solid #aaa; background: #eee; display: flex; align-items: center; justify-content: center; }
.dbody { flex: 1; min-height: 0; display: flex; padding-left: 8px; }
.tree { width: 249px; flex: none; background: #fff; border: 1px solid #d6d6d6; border-width: 1px 1px 0; display: flex; flex-direction: column; overflow: hidden; height: 467px; padding: 1px 1px 0; }
.treehead { height: 20px; flex: none; padding: 1px 0 0 3px; line-height: 19px; border-bottom: 1px solid #e4e4e4; }
.rows { flex: 1; }
.row { height: 20px; display: flex; align-items: center; border-bottom: 1px solid #e4e4e4; background-repeat: no-repeat; line-height: 18px; }
.row span { padding-top: 1px; }
.row:nth-child(odd) { background-color: #f8f8f8; }
.rt { padding-left: 5px; gap: 8px; --dot: repeating-linear-gradient(180deg, #9a9a9a 0 1px, transparent 1px 2px); --dash: repeating-linear-gradient(90deg, #9a9a9a 0 1px, transparent 1px 2px);
  background-image: var(--dot), var(--dash); background-position: 9px 0, 16px 10px; background-size: 1px 100%, 6px 1px; }
.rt.first { background-position: 9px 10px, 16px 10px; }
.rt.final { background-image: var(--dot), var(--dash); background-size: 1px 10px, 6px 1px; background-position: 9px 0, 16px 10px; }
.rc { padding-left: 41px; --dot: repeating-linear-gradient(180deg, #9a9a9a 0 1px, transparent 1px 2px); --dash: repeating-linear-gradient(90deg, #9a9a9a 0 1px, transparent 1px 2px);
  background-image: var(--dot), var(--dot), var(--dash); background-position: 9px 0, 28px 0, 29px 10px; background-size: 1px 100%, 1px 100%, 9px 1px; }
.rc.last { background-size: 1px 100%, 1px 11px, 9px 1px; }
.rc.sel { background-image: linear-gradient(#8bc0d0, #8bc0d0), var(--dot), var(--dot), var(--dash); background-position: 38px 0, 9px 0, 28px 0, 29px 10px; background-size: 100% 19px, 1px 100%, 1px 100%, 9px 1px; }
.ex { width: 9px; height: 9px; flex: none; border: 1px solid #ddd; background-color: #fafafa;
  background-image: linear-gradient(#111, #111), linear-gradient(#111, #111); background-repeat: no-repeat; background-position: 1px 3px, 3px 1px; background-size: 5px 1px, 1px 5px; }
.ex.minusx { background-size: 5px 1px, 0 0; }
.lat { font-family: "Open Sans", "Noto Sans CJK SC", sans-serif; }

.tabs { width: 490px; flex: none; margin-left: 3px; height: 467px; display: flex; flex-direction: column; border-left: 1px solid #d0d0d0; border-right: 1px solid #d0d0d0; }
.tabhead { height: 31px; flex: none; display: flex; align-items: flex-end; margin-left: -1px; }
.tab { width: 80px; height: 31px; flex: none; background: #fff; border: 1px solid #c8c8c8; border-bottom: 0; text-align: center; line-height: 31px; }
.tabline { flex: 1; height: 1px; background: #c8c8c8; }
.tabpage { flex: 1; min-height: 0; background: #eee; padding: 4px 7px 0 7px; }
.pane { width: 475px; height: 432px; display: flex; overflow: hidden; background: #fff; border: 1px solid #d8d8d8; border-bottom: 0; }
.scroll { width: 453px; flex: none; height: 431px; overflow: hidden; border-right: 1px solid #e6e6e6; }
.sbar { width: 16px; flex: none; margin-left: 5px; background: #eee; display: flex; flex-direction: column; align-items: center; padding-right: 1px; }
.sup { margin-top: 6px; flex: none; }
.thumb { width: 15px; height: 193px; margin-top: 159px; background: #a6a6a6; flex: none; }

.sec { padding-left: 11px; border-bottom: 2px solid #cfcfcf; }
.sec h2 { margin: 0; font: 400 13.500px/18px "Noto Sans CJK SC", sans-serif; color: #0d7ea6; height: 20px; }
.frow { display: flex; align-items: center; height: 24px; width: 426px; }
.frow label { margin-right: auto; line-height: 16px; }
.frow label.up2 { margin-bottom: 2px; }
.frow label.up3 { margin-bottom: 4px; }
.hq { width: 18px; height: 22px; flex: none; margin-left: 4px; }
.s-a { height: 144px; margin-top: -2px; }
.clipfirst { height: 24px; }
.r2 { margin-top: 3px; }
.tin { height: 22px; border: 1px solid #aaa; padding: 0 3px; font-size: 13px; color: #222; background: #fff; outline: 0; border-radius: 0; }
.w81 { width: 81px; }
hr.thin { margin: 4px 0; width: 432px; height: 1px; border: 0; background: #d4d4d4; }
.grow { display: flex; align-items: flex-start; width: 426px; justify-content: space-between; }
.grow .hq { margin-top: 1px; }
.gbox { width: 152px; height: 72px; padding: 2px 0 0 4px; border: 1px solid #ccc; }
.gtitle { color: #0d7ea6; padding-left: 4px; height: 18px; margin-bottom: 2px; line-height: 16px; }
.radio { display: flex; align-items: center; height: 23px; color: #222; gap: 5px; }
.rd { width: 13px; height: 13px; border-radius: 50%; border: 1px solid #444; flex: none; background: #fff; }
.rd.on { background: radial-gradient(circle at center, #333 0 3.500px, #fff 4px); }
.s-b { height: 63px; padding-top: 1px; }
.s-b h2 { margin-bottom: 5px; }
.sel-box { width: 87px; height: 24px; border: 1px solid #aaa; display: flex; align-items: center; justify-content: space-between; padding: 0 2px 0 4px; }
.sel-box svg { margin-right: 3px; }
.s-c { height: 90px; padding-top: 2px; }
.s-c h2 { margin-bottom: 5px; }
.h22 { height: 22px; }
.chk { display: flex; align-items: center; gap: 5px; }
.cb { width: 13px; height: 13px; border: 1px solid #333; flex: none; background: #fff; position: relative; }
.cb.on::after { content: ""; position: absolute; left: 2px; top: 2px; width: 7px; height: 4px; border-left: 1px solid #555; border-bottom: 1px solid #555; transform: rotate(-50deg); }
.r-col { margin-top: 5px; }
.swatch { width: 48px; height: 24px; background: #000; border: 1px solid #555; }
.s-d { padding-top: 2px; border-bottom: 0; }
.s-d h2 { margin-bottom: 6px; }
.wide { display: block; width: 430px; height: 23px; border: 1px solid #aaa; background: #fff; outline: 0; padding: 0; }
.m5 { margin-top: 5px; }

.graphics { flex: 1; background: #cacaca; border-left: 1px solid #ddd; }
.gwhite { height: 21px; background: #fff; }
.gteal { height: 2px; background: #559fb9; }
.gline1 { height: 2px; margin-top: 36px; background: #a0a0a0; }
.gline2 { height: 2px; margin-top: 4px; background: #000; }

.redframe { position: absolute; left: 268px; top: 403px; width: 172px; height: 121px; border: 4px solid #f00; box-shadow: 2px 2px 4px rgba(0,0,0,.5), inset 2px 2px 4px rgba(0,0,0,.45); }
.wm { position: absolute; left: 609px; top: 569px; display: flex; pointer-events: none; }
.wmhex { flex: none; display: block; mix-blend-mode: multiply; }
.wmtext { margin-left: 36px; padding-top: 8px; display: flex; flex-direction: column; }
.wmcn { font: 700 36px/44px "Noto Sans CJK SC", sans-serif; color: rgba(255,255,255,.52); white-space: nowrap; margin-left: -4px; }
.wmen { font: 700 10.500px/12px "Liberation Sans", sans-serif; letter-spacing: 3.400px; color: rgba(255,255,255,.5); white-space: nowrap; margin-left: 33px; margin-top: 5px; }
```
